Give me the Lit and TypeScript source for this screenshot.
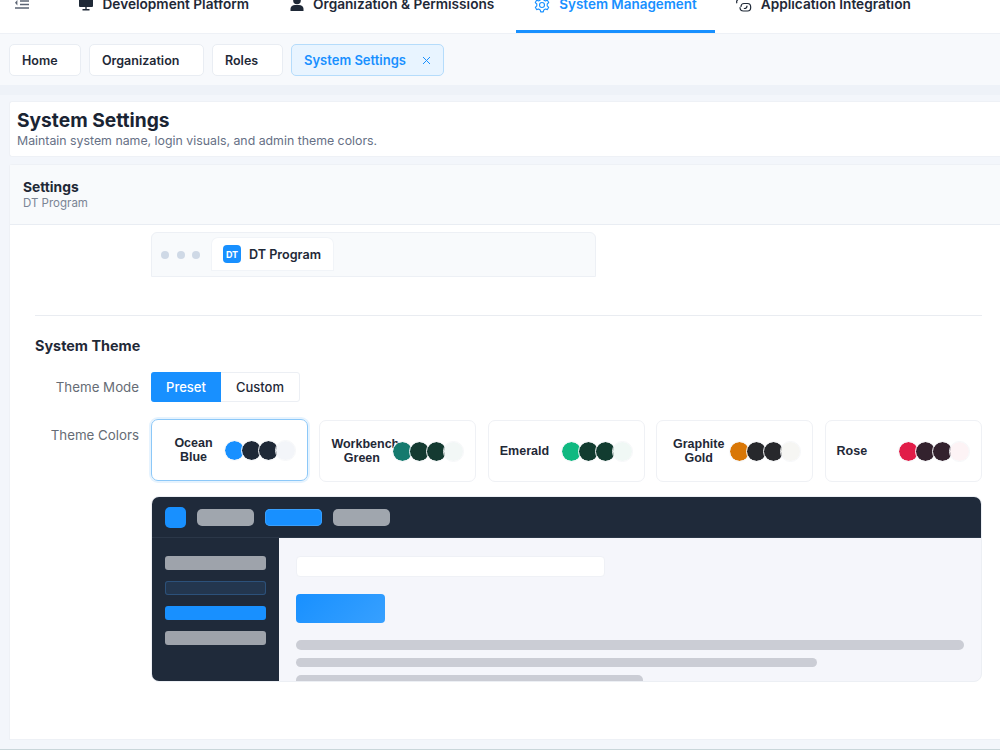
import { LitElement, html, css, svg } from 'lit';
import { customElement } from 'lit/decorators.js';

const themes = [
  { name: 'Ocean Blue', colors: ['#1890ff', '#1f2937', '#1f2937', '#f3f5f9'], active: true },
  { name: 'Workbench Green', colors: ['#157a6e', '#143a31', '#143a31', '#f2f7f6'] },
  { name: 'Emerald', colors: ['#10b981', '#123c30', '#123c30', '#f0f8f5'] },
  { name: 'Graphite Gold', colors: ['#d97706', '#27282c', '#27282c', '#f6f6f3'] },
  { name: 'Rose', colors: ['#e11d48', '#33222e', '#33222e', '#fdf3f5'] },
];

const icons = {
  monitor: svg`<rect x="1" y="-2" width="14" height="12" rx="1" fill="currentColor"/><path d="M4.500 12.800h7M8 10v2.800" stroke="currentColor" stroke-width="1.400"/>`,
  user: svg`<circle cx="8" cy="3.500" r="3.800" fill="currentColor"/><path d="M1.500 14v-2.200C1.500 9.500 3.600 8 6 8h4c2.400 0 4.500 1.500 4.500 3.800V14z" fill="currentColor"/>`,
  gear: svg`<path d="M6.700 1h2.600l.5 2 1.600.9 2-.6 1.300 2.300-1.500 1.400v1.900l1.500 1.400-1.300 2.300-2-.6-1.600.9-.5 2H6.700l-.5-2-1.600-.9-2 .6-1.300-2.300 1.500-1.400V7L1.300 5.600l1.300-2.300 2 .6 1.600-.9z" fill="none" stroke="currentColor" stroke-width="1.100" stroke-linejoin="round"/><circle cx="8" cy="8" r="2.500" fill="none" stroke="currentColor" stroke-width="1.100"/>`,
  link: svg`<path d="M1.500 3c-.8.6-1 1.700-.7 2.800M8 6.500h3.500c1.900 0 3.200 1.600 3.200 3.700S13.400 14 11.500 14H7.500c-2 0-3.500-1.500-3.500-3.500M5 9.500C5 7.800 6.200 6.500 8 6.500M11 9c0 1.500-1.200 2.500-2.700 2.500" fill="none" stroke="currentColor" stroke-width="1.200" stroke-linecap="round"/>`,
};

const navItems = [
  { label: 'Development Platform', icon: icons.monitor },
  { label: 'Organization & Permissions', icon: icons.user },
  { label: 'System Management', icon: icons.gear, active: true },
  { label: 'Application Integration', icon: icons.link },
];

@customElement('app-root')
export class AppRoot extends LitElement {
  static styles = css`
    :host {
      display: block;
      width: 1000px;
      height: 750px;
      overflow: hidden;
      position: relative;
      background: #f3f6fb;
      font-family: Inter, 'Liberation Sans', sans-serif;
      color: #1f2937;
    }
    .topbar {
      height: 33px;
      display: flex;
      background: #fff;
      overflow: hidden;
      box-sizing: border-box;
      padding-left: 15px;
    }
    .menu-btn {
      width: 14px;
      height: 10px;
      flex: none;
      margin-right: 31px;
      color: #5b6473;
    }
    .nav {
      display: flex;
      gap: 3.500px;
    }
    .nav-item {
      display: flex;
      align-items: flex-end;
      gap: 8.500px;
      padding: 0 18px 17px;
      height: 33px;
      box-sizing: border-box;
      font-size: 13.650px;
      font-weight: 600;
      line-height: 18px;
      white-space: nowrap;
      color: #1f2937;
      border-bottom: 3px solid transparent;
    }
    .nav-item.active {
      color: #1890ff;
      border-bottom-color: #1890ff;
      font-size: 13.450px;
      gap: 9.500px;
    }
    .nav-item svg {
      width: 16px;
      height: 16px;
      flex: none;
      overflow: visible;
    }
    .tabs {
      height: 52px;
      box-sizing: border-box;
      display: flex;
      align-items: center;
      gap: 8px;
      padding: 1px 0 0 9px;
      background: #f7f9fc;
      border-top: 1px solid #eef1f6;
    }
    .tab {
      height: 32px;
      box-sizing: border-box;
      display: flex;
      align-items: center;
      padding: 0 12px;
      background: #fff;
      border: 1px solid #e9edf3;
      border-radius: 5px;
      font-size: 12.500px;
      font-weight: 600;
    }
    .tab.active {
      background: #e8f4ff;
      border-color: #b5dcfb;
      color: #1890ff;
      font-size: 13px;
      gap: 16px;
    }
    .tab svg {
      width: 9px;
      height: 9px;
    }
    .main {
      border-top: 10px solid #eef2f8;
      padding: 6px 0 10px 9px;
      height: 665px;
      box-sizing: border-box;
      display: flex;
      flex-direction: column;
      gap: 7px;
    }
    .page-head {
      height: 56px;
      box-sizing: border-box;
      background: #fff;
      border: 1px solid #eef1f6;
      border-right: 0;
      border-radius: 3px 0 0 3px;
      padding: 6px 7px;
    }
    .page-head h1 {
      margin: 0;
      font-size: 19.200px;
      line-height: 24px;
      font-weight: 700;
      color: #1a2433;
    }
    .page-head p {
      margin: 1px 0 0;
      font-size: 12.330px;
      line-height: 16px;
      color: #667085;
    }
    .card {
      flex: 1;
      min-height: 0;
      background: #fff;
      border: 1px solid #eef1f6;
      border-right: 0;
      border-radius: 3px 0 0 0;
    }
    .card-head {
      height: 60px;
      box-sizing: border-box;
      background: #f8fafc;
      border-bottom: 1px solid #e9edf3;
      padding: 14px 13px;
    }
    .card-head b {
      display: block;
      font-size: 13.800px;
      line-height: 16px;
      font-weight: 700;
    }
    .card-head span {
      display: block;
      font-size: 11.500px;
      line-height: 16px;
      color: #7a8494;
    }
    .card-body {
      padding: 7px 18px 0 25px;
    }
    .login-preview {
      margin-left: 116px;
      width: 445px;
      height: 45px;
      box-sizing: border-box;
      background: #f8fafc;
      border: 1px solid #edf0f5;
      border-radius: 6px 6px 0 0;
      display: flex;
      align-items: flex-end;
      padding-left: 9px;
      gap: 12px;
    }
    .dots {
      display: flex;
      gap: 7.500px;
      align-self: center;
    }
    .dots i {
      width: 8px;
      height: 8px;
      border-radius: 50%;
      background: #cfd9e6;
    }
    .browser-tab {
      width: 121px;
      height: 32px;
      box-sizing: border-box;
      margin-bottom: 6px;
      display: flex;
      align-items: center;
      gap: 8px;
      padding-left: 11px;
      background: #fff;
      border-radius: 6px 6px 0 0;
      box-shadow: 0 0 0 1px #f1f4f8;
      font-size: 12.600px;
      font-weight: 600;
    }
    .logo {
      width: 18px;
      height: 18px;
      border-radius: 4px;
      background: #1890ff;
      color: #fff;
      font-size: 9px;
      font-weight: 700;
      display: grid;
      place-items: center;
    }
    .divider {
      height: 1px;
      background: #e9ecf1;
      margin: 38px 0 0;
    }
    h2 {
      margin: 21px 0 0;
      font-size: 14.400px;
      line-height: 18px;
      font-weight: 700;
    }
    .row {
      display: grid;
      grid-template-columns: 104px 1fr;
      column-gap: 12px;
    }
    .row.mode {
      margin-top: 17px;
      align-items: center;
    }
    .row.colors {
      margin-top: 18px;
    }
    .field-label {
      text-align: right;
      font-size: 13.300px;
      line-height: 30px;
      color: #666c75;
    }
    .segment {
      display: flex;
      width: 149px;
      height: 30px;
      box-sizing: border-box;
      border: 1px solid #eceff4;
      border-radius: 3px;
      font-size: 13px;
      font-weight: 500;
    }
    .segment span {
      display: grid;
      place-items: center;
      flex: 1;
    }
    .segment .on {
      flex: none;
      width: 70px;
      margin: -1px 0 -1px -1px;
      background: #1890ff;
      color: #fff;
      border-radius: 3px 0 0 3px;
    }
    .theme-grid {
      display: grid;
      grid-template-columns: repeat(5, 157px);
      column-gap: 11.400px;
    }
    .theme {
      height: 62px;
      box-sizing: border-box;
      display: flex;
      align-items: center;
      justify-content: space-between;
      padding: 0 11px;
      border: 1px solid #eff1f5;
      border-radius: 7px;
    }
    .theme.active {
      border-color: #8cc8f8;
      box-shadow: 0 0 0 2px #e6f3fe;
      transform: translateY(-1px);
    }
    .theme-name {
      flex: 0 1 auto;
      min-width: 0;
      text-align: center;
      font-family: 'Liberation Sans', Arial, sans-serif;
      font-size: 12.500px;
      line-height: 14.500px;
      font-weight: 700;
    }
    .swatches {
      display: flex;
      flex: none;
    }
    .swatches i {
      width: 21px;
      height: 21px;
      box-sizing: border-box;
      border: 1.500px solid #f6f7f9;
      border-radius: 50%;
      margin-left: -4px;
      background-clip: padding-box;
    }
    .swatches i:first-child {
      margin-left: 0;
    }
    .demo {
      margin: 14px 0 0 116px;
      width: 831px;
      height: 185.500px;
      border: 1px solid #eceff4;
      border-radius: 8px;
      overflow: hidden;
      box-sizing: border-box;
      background: #f5f6fb;
    }
    .demo-top {
      height: 41px;
      box-sizing: border-box;
      display: flex;
      align-items: center;
      gap: 11px;
      padding-left: 13px;
      background: #1f2a3a;
      border-bottom: 1px solid #2b3748;
    }
    .demo-logo {
      width: 21px;
      height: 21px;
      border-radius: 5px;
      background: #1890ff;
    }
    .pill {
      width: 57px;
      height: 17px;
      border-radius: 5px;
      background: #a0a6ae;
    }
    .pill.on {
      background: #1890ff;
      box-shadow: inset 0 0 0 1px #3a9ffb;
    }
    .demo-bottom {
      display: flex;
      height: 144px;
    }
    .demo-side {
      width: 127px;
      box-sizing: border-box;
      padding: 18px 13px;
      background: #1f2a3a;
      display: flex;
      flex-direction: column;
      gap: 11.500px;
    }
    .side-item {
      height: 13.500px;
      border-radius: 3px;
      background: #9ea3ab;
    }
    .side-item.hover {
      background: #23364e;
      box-shadow: inset 0 0 0 1px #2c517a;
    }
    .side-item.on {
      background: #1890ff;
    }
    .demo-main {
      flex: 1;
      min-width: 0;
      overflow: hidden;
      padding: 18px 17px 0 17px;
    }
    .demo-input {
      width: 309px;
      height: 21px;
      box-sizing: border-box;
      background: #fff;
      border: 1px solid #eff1f6;
      border-radius: 4px;
    }
    .demo-btn {
      width: 89px;
      height: 29px;
      margin-top: 17px;
      border-radius: 4px;
      background: linear-gradient(135deg, #1890ff, #37a0ff);
    }
    .lines {
      margin-top: 17px;
      display: flex;
      flex-direction: column;
      gap: 8px;
    }
    .lines div {
      height: 9.500px;
      flex: none;
      border-radius: 5px;
      background: #cbcdd5;
    }
    .footer-line {
      position: absolute;
      left: 0;
      right: 0;
      bottom: 0;
      height: 1px;
      background: #c9d6da;
    }
  `;

  render() {
    return html`
      <div class="topbar">
        <svg class="menu-btn" viewBox="0 0 14 10">
          <path d="M5 1h9M5 4.500h9M0 8h14" stroke="currentColor" stroke-width="1.300"/>
          <path d="M3 .5v7L0 4z" fill="currentColor" transform="translate(0 -.5) scale(.8)"/>
        </svg>
        <div class="nav">
          ${navItems.map(
            (n) => html`<div class="nav-item ${n.active ? 'active' : ''}">
              <svg viewBox="0 0 16 16">${n.icon}</svg>${n.label}
            </div>`,
          )}
        </div>
      </div>
      <div class="tabs">
        <div class="tab" style="width:72px">Home</div>
        <div class="tab" style="width:115px">Organization</div>
        <div class="tab" style="width:71px">Roles</div>
        <div class="tab active">
          System Settings
          <svg viewBox="0 0 9 9"><path d="M1 1l7 7M8 1L1 8" stroke="currentColor" stroke-width="1"/></svg>
        </div>
      </div>
      <div class="main">
        <div class="page-head">
          <h1>System Settings</h1>
          <p>Maintain system name, login visuals, and admin theme colors.</p>
        </div>
        <div class="card">
          <div class="card-head">
            <b>Settings</b>
            <span>DT Program</span>
          </div>
          <div class="card-body">
            <div class="login-preview">
              <div class="dots"><i></i><i></i><i></i></div>
              <div class="browser-tab"><span class="logo">DT</span>DT Program</div>
            </div>
            <div class="divider"></div>
            <h2>System Theme</h2>
            <div class="row mode">
              <div class="field-label">Theme Mode</div>
              <div class="segment"><span class="on">Preset</span><span>Custom</span></div>
            </div>
            <div class="row colors">
              <div class="field-label">Theme Colors</div>
              <div class="theme-grid">
                ${themes.map(
                  (t) => html`<div class="theme ${t.active ? 'active' : ''}">
                    <div class="theme-name">${t.name}</div>
                    <div class="swatches">
                      ${t.colors.map((c) => html`<i style="background-color:${c}"></i>`)}
                    </div>
                  </div>`,
                )}
              </div>
            </div>
            <div class="demo">
              <div class="demo-top">
                <div class="demo-logo"></div>
                <div class="pill"></div>
                <div class="pill on"></div>
                <div class="pill"></div>
              </div>
              <div class="demo-bottom">
                <div class="demo-side">
                  <div class="side-item"></div>
                  <div class="side-item hover"></div>
                  <div class="side-item on"></div>
                  <div class="side-item"></div>
                </div>
                <div class="demo-main">
                  <div class="demo-input"></div>
                  <div class="demo-btn"></div>
                  <div class="lines">
                    <div style="width:100%"></div>
                    <div style="width:78%"></div>
                    <div style="width:52%"></div>
                  </div>
                </div>
              </div>
            </div>
          </div>
        </div>
      </div>
      <div class="footer-line"></div>
    `;
  }
}
